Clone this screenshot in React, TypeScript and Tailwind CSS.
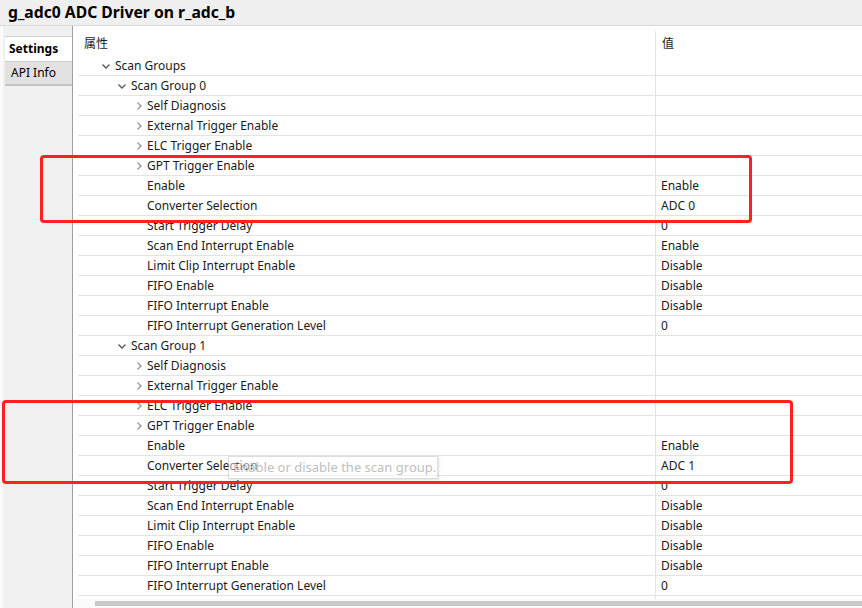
import React from 'react';

type Row = {
  label: string;
  level: 1 | 2 | 3;
  toggle?: 'open' | 'closed';
  value?: string;
};

const group = (n: number, vals: string[]): Row[] => [
  { label: `Scan Group ${n}`, level: 2, toggle: 'open' },
  { label: 'Self Diagnosis', level: 3, toggle: 'closed' },
  { label: 'External Trigger Enable', level: 3, toggle: 'closed' },
  { label: 'ELC Trigger Enable', level: 3, toggle: 'closed' },
  { label: 'GPT Trigger Enable', level: 3, toggle: 'closed' },
  { label: 'Enable', level: 3, value: vals[0] },
  { label: 'Converter Selection', level: 3, value: vals[1] },
  { label: 'Start Trigger Delay', level: 3, value: vals[2] },
  { label: 'Scan End Interrupt Enable', level: 3, value: vals[3] },
  { label: 'Limit Clip Interrupt Enable', level: 3, value: vals[4] },
  { label: 'FIFO Enable', level: 3, value: vals[5] },
  { label: 'FIFO Interrupt Enable', level: 3, value: vals[6] },
  { label: 'FIFO Interrupt Generation Level', level: 3, value: vals[7] },
];

const rows: Row[] = [
  { label: 'Scan Groups', level: 1, toggle: 'open' },
  ...group(0, ['Enable', 'ADC 0', '0', 'Enable', 'Disable', 'Disable', 'Disable', '0']),
  ...group(1, ['Enable', 'ADC 1', '0', 'Disable', 'Disable', 'Disable', 'Disable', '0']),
  { label: 'Scan Group 2', level: 2, toggle: 'closed' },
];

const indent = {
  1: 'pl-[21px]',
  2: 'pl-[37px]',
  3: 'pl-[53px]',
};

function Chevron({ open }: { open: boolean }) {
  if (open) {
    return (
      <svg width="10" height="10" viewBox="0 0 10 10" className="ml-[2px]">
        <path d="M1.5 3.5 L5 7 L8.5 3.5" fill="none" stroke="#555" strokeWidth="1.3" />
      </svg>
    );
  }
  return (
    <svg width="10" height="10" viewBox="0 0 10 10" className="ml-[3px]">
      <path d="M3.5 1.5 L7 5 L3.5 8.5" fill="none" stroke="#9a9a9a" strokeWidth="1.4" />
    </svg>
  );
}

function TreeRow({ row }: { row: Row }) {
  return (
    <div className="flex h-[20px] border-b border-[#e3e3e3] ml-[5px]">
      <div className={`flex items-center w-[577px] shrink-0 ${indent[row.level]}`}>
        <div className="w-[16px] h-[20px] flex items-center shrink-0">
          {row.toggle && <Chevron open={row.toggle === 'open'} />}
        </div>
        <span className="whitespace-nowrap">{row.label}</span>
      </div>
      <div className="flex items-center border-l border-[#e3e3e3] pl-[5px] flex-1">
        {row.value}
      </div>
    </div>
  );
}

export default function App() {
  return (
    <div
      className="relative w-[862px] h-[608px] overflow-hidden bg-white text-[12px] text-[#1a1a1a]"
      style={{ fontFamily: '"Noto Sans", "Noto Sans CJK SC", sans-serif' }}
    >
      <div className="h-[26px] bg-[#efefef] border-b border-[#d9d9d9] flex items-center pl-[8px] text-[15.7px] font-bold text-black">
        g_adc0 ADC Driver on r_adc_b
      </div>
      <div className="flex h-[582px]">
        <div className="w-[73px] shrink-0 bg-[#f0f0f0] border-l-[3px] border-l-[#fafafa] border-r border-r-[#a0a0a0] flex flex-col pt-[10px]">
          <div className="ml-[2px] h-[26px] bg-white border-y border-[#cfcfcf] flex items-center pl-[4px] font-bold text-black">
            Settings
          </div>
          <div className="ml-[2px] h-[24px] bg-[#e1e1e1] border-b-2 border-[#c4c4c4] flex items-center pl-[6px] text-black">
            API Info
          </div>
        </div>
        <div className="flex-1 flex flex-col">
          <div className="flex h-[30px] ml-[5px] shrink-0">
            <div className="w-[577px] shrink-0 pl-[6px] pt-[9px]">属性</div>
            <div className="flex-1 mt-[5px] border-l border-[#e3e3e3] pl-[6px] pt-[4px]">值</div>
          </div>
          {rows.map((r, i) => (
            <TreeRow key={i} row={r} />
          ))}
        </div>
      </div>

      <div className="absolute left-[74px] right-0 top-[599px] h-[9px] bg-[#fafafa] flex items-center">
        <div className="ml-[21px] h-[5px] flex-1 bg-[#c9c9c9]" />
      </div>

      <div className="absolute left-[40px] top-[155px] w-[712px] h-[68px] border-[3px] border-[#ff2020] rounded-[4px]" />
      <div className="absolute left-[2px] top-[400px] w-[791px] h-[84px] border-[3px] border-[#ff2020] rounded-[4px]" />

      <div className="absolute left-[228px] top-[456px] w-[210px] h-[23px] opacity-50 bg-white border border-[#bdbdbd] shadow-[1px_1px_2px_rgba(0,0,0,0.25)] flex items-center pl-[4px] text-[13px] text-[#808080] whitespace-nowrap">
        Enable or disable the scan group.
      </div>
    </div>
  );
}
